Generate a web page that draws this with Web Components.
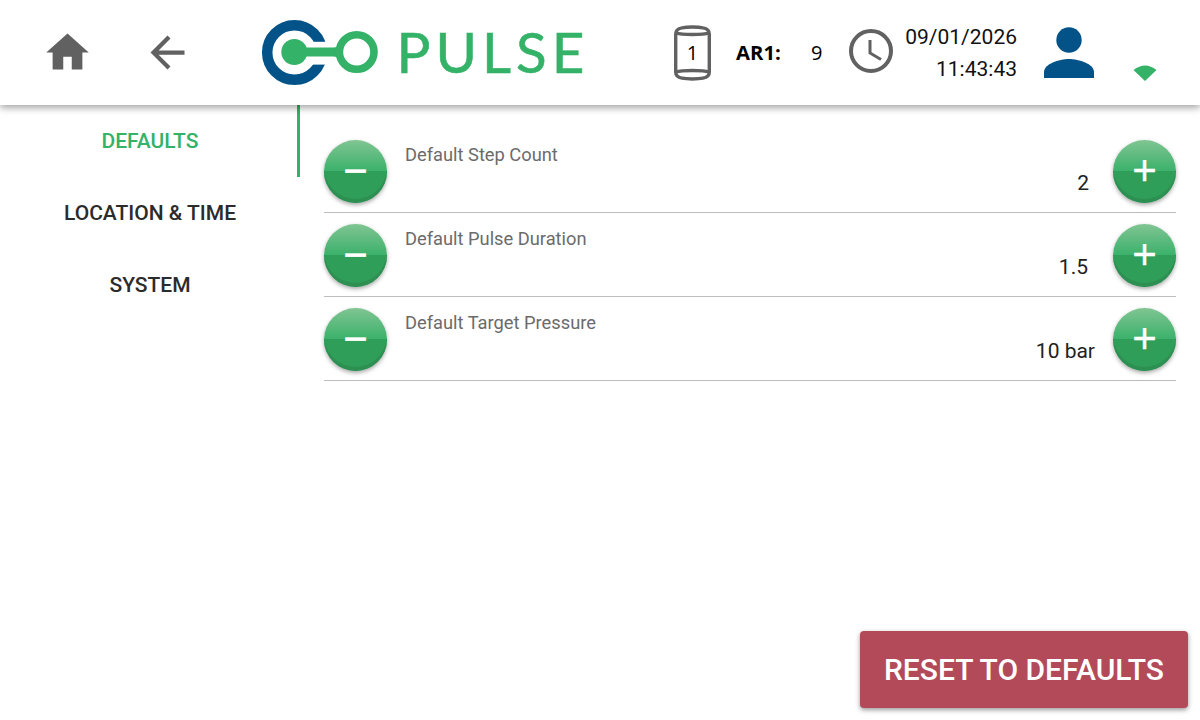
<!DOCTYPE html>
<html>
<head>
<meta charset="utf-8">
<title>Pulse</title>
<style>
  html, body { margin: 0; padding: 0; height: 100%; background: #fff; }
  body { font-family: Roboto, "Liberation Sans", sans-serif; overflow: hidden; }
</style>
</head>
<body>
<pulse-app>
  <pulse-header slot="header"></pulse-header>
  <side-nav slot="nav">
    <nav-item active>DEFAULTS</nav-item>
    <nav-item>LOCATION &amp; TIME</nav-item>
    <nav-item>SYSTEM</nav-item>
  </side-nav>
  <settings-panel slot="main">
    <stepper-row label="Default Step Count" value="2" inset="24"></stepper-row>
    <stepper-row label="Default Pulse Duration" value="1.5" inset="25"></stepper-row>
    <stepper-row label="Default Target Pressure" value="10 bar" inset="18"></stepper-row>
    <reset-button slot="footer">RESET TO DEFAULTS</reset-button>
  </settings-panel>
</pulse-app>

<script>
class PulseApp extends HTMLElement {
  constructor() {
    super();
    this.attachShadow({ mode: 'open' });
    this.shadowRoot.innerHTML = `
      <style>
        :host { display: grid; grid-template: 105px 615px / 300px 900px; width: 1200px; height: 720px; }
        ::slotted([slot=header]) { grid-column: 1 / 3; }
      </style>
      <slot name="header"></slot>
      <slot name="nav"></slot>
      <slot name="main"></slot>
    `;
  }
}

class PulseHeader extends HTMLElement {
  constructor() {
    super();
    this.attachShadow({ mode: 'open' });
    this.shadowRoot.innerHTML = `
      <style>
        :host {
          display: flex; align-items: flex-start; height: 105px; position: relative; z-index: 2;
          background: #fff; box-shadow: 0 3px 7px rgba(0, 0, 0, .35);
        }
        svg { display: block; flex: none; }
        .home { margin: 27px 0 0 42px; }
        .back { margin: 26.8px 0 0 49px; }
        .logo { margin: 19px 0 0 68px; }
        .brand {
          font: 400 56.5px/1 Lato, sans-serif; color: #34b267; letter-spacing: 5px;
          -webkit-text-stroke: .6px #34b267;
          margin: 23px 0 0 15.5px; width: 196.5px; white-space: nowrap;
        }
        .can { position: relative; margin: 24.5px 0 0 81px; width: 37px; height: 56px; flex: none; }
        .can span {
          position: absolute; inset: 0; display: flex; align-items: center; justify-content: center;
          font: 400 20px "Open Sans", sans-serif; color: #000;
        }
        .ar { font: 700 20.3px/1 "Open Sans", sans-serif; color: #000; margin: 42px 0 0 25px; width: 75px; flex: none; }
        .count { font: 400 20px/1 "Open Sans", sans-serif; color: #000; margin: 43px 0 0 0; width: 38px; flex: none; }
        .clock { margin: 28px 0 0 0; }
        .when {
          font: 400 21px/32px Roboto, sans-serif; color: #111; text-align: right;
          margin: 21px 0 0 12px; width: 112px; flex: none;
        }
        .user { margin: 26px 0 0 26px; }
        .wifi { margin: 64px 0 0 37.5px; }
      </style>
      <svg class="home" width="51" height="51" viewBox="0 0 24 24" fill="#616161"><path d="M10 20v-6h4v6h5v-8h3L12 3 2 12h3v8z"/></svg>
      <svg class="back" width="51" height="51" viewBox="0 0 24 24" fill="#616161"><path d="M20 11H7.83l5.59-5.59L12 4l-8 8 8 8 1.41-1.41L7.83 13H20v-2z"/></svg>
      <svg class="logo" width="120" height="68" viewBox="261 19 120 68">
        <circle cx="294.5" cy="52.5" r="27.3" fill="none" stroke="#035388" stroke-width="10.5"/>
        <rect x="309" y="41.8" width="25" height="22.8" fill="#fff"/>
        <circle cx="294.3" cy="52" r="13" fill="#34b267"/>
        <path d="M300 47.5H333Q338 47.5 342 42V62Q338 56.5 333 56.5H300Z" fill="#34b267"/>
        <circle cx="356.7" cy="52" r="17.3" fill="#fff" stroke="#34b267" stroke-width="7.6"/>
      </svg>
      <div class="brand">PULSE</div>
      <div class="can">
        <svg width="37" height="56" viewBox="0 0 37 56" fill="none" stroke="#616161" stroke-width="3.4">
          <path d="M1.7 9C1.7 5 4 3.5 8 2.8 13 1.8 24 1.8 29 2.8 33 3.500 35.3 5 35.3 9V47C35.3 51 33 52.5 29 53.2 24 54.2 13 54.2 8 53.2 4 52.5 1.7 51 1.7 47Z"/>
          <path d="M2 8C8 10 29 10 35 8M2 47C8 45 29 45 35 47"/>
        </svg>
        <span>1</span>
      </div>
      <div class="ar">AR1:</div>
      <div class="count">9</div>
      <svg class="clock" width="44" height="46" viewBox="0 0 44 46" fill="none" stroke="#616161">
        <circle cx="22" cy="23" r="20" stroke-width="4"/>
        <path d="M21 12v13l11 6.5" stroke-width="3"/>
      </svg>
      <div class="when">09/01/2026<br>11:43:43</div>
      <svg class="user" width="52" height="53" viewBox="0 0 52 53" fill="#035388">
        <circle cx="26" cy="14" r="12.7"/>
        <path d="M1 52v-6c0-8 15-13 25-13s25 5 25 13v6z"/>
      </svg>
      <svg class="wifi" width="24" height="17" viewBox="0 0 24 17" fill="#34b267"><path d="M.5 6Q12-3 23.5 6L12 17z"/></svg>
    `;
  }
}

class SideNav extends HTMLElement {
  constructor() {
    super();
    this.attachShadow({ mode: 'open' });
    this.shadowRoot.innerHTML = `
      <style>:host { display: flex; flex-direction: column; width: 300px; }</style>
      <slot></slot>
    `;
  }
}

class NavItem extends HTMLElement {
  constructor() {
    super();
    this.attachShadow({ mode: 'open' });
    this.shadowRoot.innerHTML = `
      <style>
        :host {
          display: flex; align-items: center; justify-content: center; height: 72px; box-sizing: border-box;
          border-right: 3px solid transparent; padding-left: 3px;
          font: 500 21px Roboto, sans-serif; color: #2b2b2b;
        }
        :host([active]) { color: #34b267; border-right-color: #34b267; }
      </style>
      <slot></slot>
    `;
  }
}

class SettingsPanel extends HTMLElement {
  constructor() {
    super();
    this.attachShadow({ mode: 'open' });
    this.shadowRoot.innerHTML = `
      <style>
        :host { display: flex; flex-direction: column; height: 615px; box-sizing: border-box; padding: 24px 12px 12px 24px; }
        .rows { flex: 1; padding-right: 12px; }
        .foot { display: flex; justify-content: flex-end; }
      </style>
      <div class="rows"><slot></slot></div>
      <div class="foot"><slot name="footer"></slot></div>
    `;
  }
}

class StepperRow extends HTMLElement {
  constructor() {
    super();
    this.attachShadow({ mode: 'open' });
  }

  connectedCallback() {
    const label = this.getAttribute('label') || '';
    const value = this.getAttribute('value') || '';
    const inset = this.getAttribute('inset') || '25';
    this.shadowRoot.innerHTML = `
      <style>
        :host {
          display: flex; align-items: flex-start; height: 84px; box-sizing: border-box;
          padding-top: 11px; border-bottom: 1px solid #bdbdbd;
        }
        .mid { flex: 1; height: 63px; padding: 5px 0 0 18px; box-sizing: border-box; }
        .label { font: 400 18.3px/20px Roboto, sans-serif; color: #6b6b6b; }
        .value { font: 400 21px/24px Roboto, sans-serif; color: #222; text-align: right; margin-top: 6px; padding-right: ${inset}px; }
      </style>
      <round-button>\u2212</round-button>
      <div class="mid">
        <div class="label">${label}</div>
        <div class="value">${value}</div>
      </div>
      <round-button>+</round-button>
    `;
  }
}

class RoundButton extends HTMLElement {
  constructor() {
    super();
    this.attachShadow({ mode: 'open' });
    this.shadowRoot.innerHTML = `
      <style>
        :host {
          display: flex; align-items: center; justify-content: center; flex: none;
          width: 63px; height: 63px; border-radius: 50%; color: #fff;
          font: 400 42px/58px "Liberation Sans", sans-serif;
          -webkit-text-stroke: .3px #fff;
          background: linear-gradient(to bottom, #80c593 0%, #3cb16b 49%, #2f9e59 49%, #2f9e59 100%);
          box-shadow: inset 0 -4px 0 #2e8f52, 0 2px 4px rgba(0, 0, 0, .35);
        }
        span { display: block; margin-top: -2px; }
      </style>
      <span><slot></slot></span>
    `;
  }
}

class ResetButton extends HTMLElement {
  constructor() {
    super();
    this.attachShadow({ mode: 'open' });
    this.shadowRoot.innerHTML = `
      <style>
        :host {
          display: flex; align-items: center; justify-content: center;
          width: 328px; height: 77px; border-radius: 4px; background: #b34a5a; color: #fff;
          font: 500 30px Roboto, sans-serif;
          box-shadow: 0 2px 5px rgba(0, 0, 0, .4);
        }
      </style>
      <slot></slot>
    `;
  }
}

customElements.define('pulse-app', PulseApp);
customElements.define('pulse-header', PulseHeader);
customElements.define('side-nav', SideNav);
customElements.define('nav-item', NavItem);
customElements.define('settings-panel', SettingsPanel);
customElements.define('stepper-row', StepperRow);
customElements.define('round-button', RoundButton);
customElements.define('reset-button', ResetButton);
</script>
</body>
</html>
